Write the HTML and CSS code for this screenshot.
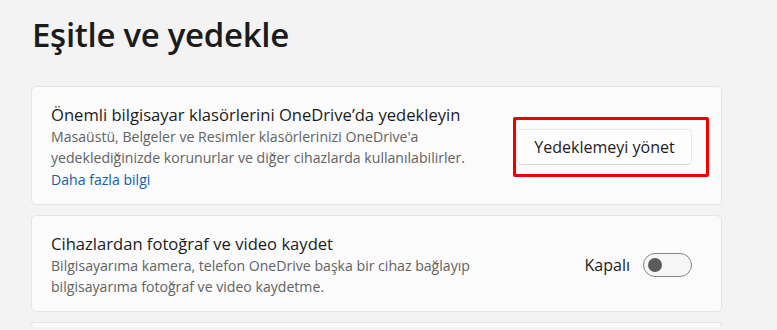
FILE: index.html
```html
<!DOCTYPE html>
<html lang="tr">
<head>
  <meta charset="UTF-8">
  <meta name="viewport" content="width=device-width, initial-scale=1.0">
  <title>Eşitle ve yedekle</title>
  <link rel="stylesheet" href="styles.css">
</head>
<body>

  <h1 class="page-title">Eşitle ve yedekle</h1>

  <div class="card">
    <div class="card-text">
      <div class="card-title">Önemli bilgisayar klasörlerini OneDrive’da yedekleyin</div>
      <div class="card-desc">Masaüstü, Belgeler ve Resimler klasörlerinizi OneDrive'a<br>yedeklediğinizde korunurlar ve diğer cihazlarda kullanılabilirler.</div>
      <a class="card-link" href="#">Daha fazla bilgi</a>
    </div>
    <div class="highlight">
      <button class="btn">Yedeklemeyi yönet</button>
    </div>
  </div>

  <div class="card">
    <div class="card-text">
      <div class="card-title">Cihazlardan fotoğraf ve video kaydet</div>
      <div class="card-desc">Bilgisayarıma kamera, telefon OneDrive başka bir cihaz bağlayıp<br>bilgisayarıma fotoğraf ve video kaydetme.</div>
    </div>
    <div class="toggle-wrap">
      <span class="toggle-label">Kapalı</span>
      <span class="toggle"><span class="knob"></span></span>
    </div>
  </div>

  <div class="card card-cut"></div>

</body>
</html>
```

FILE: styles.css
```css
body {
  margin: 0;
  padding: 15px 55px 0 31px;
  background: #f3f3f3;
  font-family: "Open Sans", "Noto Sans", sans-serif;
  color: #1b1b1b;
  overflow: hidden;
  height: 330px;
  box-sizing: border-box;
}

.page-title {
  font-size: 33px;
  font-weight: 600;
  margin: 0 0 31px 1px;
  line-height: 40px;
  letter-spacing: -0.3px;
}

.card {
  display: flex;
  align-items: center;
  justify-content: space-between;
  background: #fbfbfb;
  border: 1px solid #e5e5e5;
  border-radius: 5px;
  padding: 17px 29px 14px 19px;
  margin-bottom: 10px;
}

.card-title {
  font-size: 16.6px;
  line-height: 22px;
  color: #1b1b1b;
}

.card-desc {
  font-size: 14.1px;
  line-height: 21px;
  color: #636363;
}

.card-link {
  font-size: 14.1px;
  line-height: 21px;
  color: #1460a8;
  text-decoration: none;
}

/* kırmızı işaret kutusu */
.highlight {
  border: 3px solid #ee0000;
  border-radius: 2px;
  padding: 9px 14px 9px 1px;
  margin: -12px -17px -12px -4px;
}

.btn {
  display: block;
  font-family: inherit;
  font-size: 16px;
  color: #1b1b1b;
  background: #fdfdfd;
  border: 1px solid #e8e8e8;
  border-bottom-color: #d6d6d6;
  border-radius: 5px;
  height: 36px;
  width: 175px;
  padding: 0;
}

.toggle-wrap {
  display: flex;
  align-items: center;
  gap: 13px;
}

.toggle-label {
  font-size: 16px;
}

.toggle {
  display: flex;
  align-items: center;
  width: 47px;
  height: 22px;
  border: 1px solid #858585;
  border-radius: 12px;
  background: #f6f6f6;
}

.knob {
  width: 14px;
  height: 14px;
  border-radius: 50%;
  background: #5b5b5b;
  margin-left: 4px;
}

.card-cut {
  height: 4px;
  padding: 0;
  margin-bottom: 0;
  border-bottom: 0;
}
```
